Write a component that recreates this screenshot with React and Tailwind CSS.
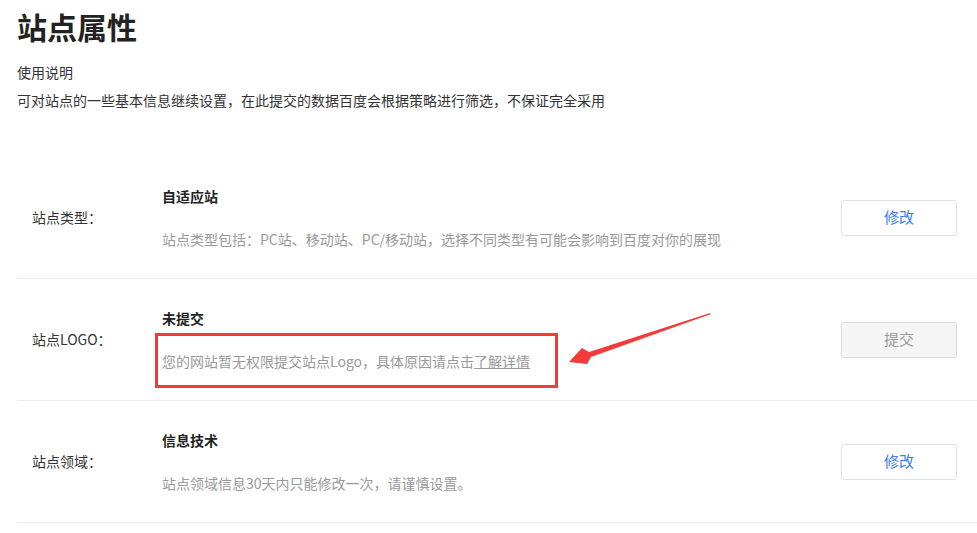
import React from 'react';

const font = { fontFamily: '"Noto Sans CJK SC", "Noto Sans", sans-serif' };

function Row({ label, title, desc, action, disabled, annotated }) {
  return (
    <div className="flex items-center h-[122px] border-b border-[#ebebeb]">
      <div className="w-[145px] pl-[15px] text-[14px] text-[#333]">{label}</div>
      <div className="relative flex-1">
        <div className="h-[20px] leading-[20px] text-[14px] font-bold text-[#222]">{title}</div>
        <div className="mt-[23px] h-[20px] leading-[20px] text-[14px] text-[#999]">{desc}</div>
        {annotated && (
          <div className="absolute left-[-7px] top-[25px] w-[403px] h-[55px] border-[3px] border-[#f23c3c]" />
        )}
      </div>
      <button
        className={
          disabled
            ? 'mr-[20px] w-[116px] h-[36px] rounded-[3px] border border-[#dcdcdc] bg-[#f5f5f5] text-[15px] text-[#999]'
            : 'mr-[20px] w-[116px] h-[36px] rounded-[3px] border border-[#e0e0e0] bg-white text-[15px] text-[#3d7cf0]'
        }
      >
        {action}
      </button>
    </div>
  );
}

export default function App() {
  return (
    <div
      className="relative w-[977px] h-[533px] bg-white overflow-hidden [text-spacing-trim:space-all]"
      style={font}
    >
      <div className="pl-[17px]">
        <h1 className="pt-[4px] h-[52px] leading-[44px] text-[30px] font-bold text-[#222]">站点属性</h1>
        <div className="mt-[10px] h-[20px] leading-[20px] text-[14px] text-[#333]">使用说明</div>
        <div className="mt-[8px] h-[20px] leading-[20px] text-[14px] text-[#333]">
          可对站点的一些基本信息继续设置，在此提交的数据百度会根据策略进行筛选，不保证完全采用
        </div>
        <div className="mt-[47px]">
          <Row
            label="站点类型："
            title="自适应站"
            desc="站点类型包括：PC站、移动站、PC/移动站，选择不同类型有可能会影响到百度对你的展现"
            action="修改"
          />
          <Row
            label="站点LOGO："
            title="未提交"
            desc={
              <>
                您的网站暂无权限提交站点Logo，具体原因请点击<span className="underline">了解详情</span>
              </>
            }
            action="提交"
            disabled
            annotated
          />
          <Row
            label="站点领域："
            title="信息技术"
            desc="站点领域信息30天内只能修改一次，请谨慎设置。"
            action="修改"
          />
        </div>
      </div>
      <svg className="absolute left-0 top-0 pointer-events-none" width="977" height="533">
        <polygon points="710,313 589,352 582,348 569,362 587,364 591,357 711,314" fill="#f23c3c" />
      </svg>
    </div>
  );
}
